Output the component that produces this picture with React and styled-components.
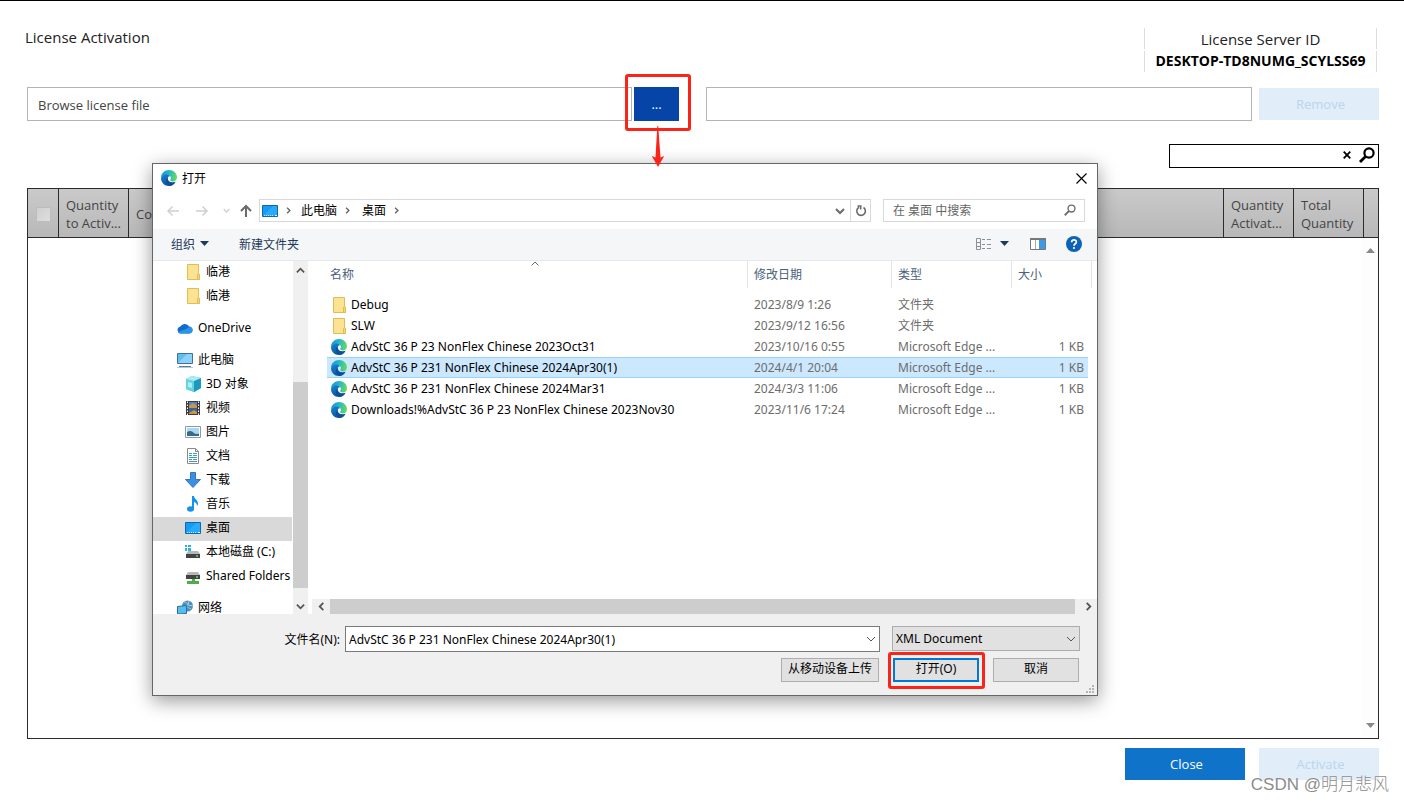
import { useState } from 'react';
import styled, { createGlobalStyle } from 'styled-components';

const GlobalStyle = createGlobalStyle`
  *, *::before, *::after {
    box-sizing: border-box;
  }

  body {
    margin: 0;
    background: #fff;
    color: #222;
    font-family: 'Open Sans', 'Noto Sans CJK SC', sans-serif;
    font-size: 13px;
  }

  button, input, select {
    margin: 0;
    padding: 0;
    border: none;
    border-radius: 0;
    background: none;
    color: inherit;
    font: inherit;
    outline: none;
  }

  a {
    color: inherit;
    text-decoration: none;
  }

  svg {
    display: block;
    flex-shrink: 0;
  }
`;

/* ---------- page ---------- */

const Page = styled.main`
  position: relative;
  display: flex;
  flex-direction: column;
  min-height: 100vh;
  padding: 27px 25px 23px;
  border-top: 1px solid #000;
`;

const Header = styled.header`
  display: flex;
  justify-content: space-between;
  padding-right: 2px;
  margin-bottom: 15px;
`;

const PageTitle = styled.h1`
  margin: 0;
  font-size: 15px;
  font-weight: 400;
  line-height: 18px;
`;

const ServerId = styled.div`
  display: flex;
  flex-direction: column;
  gap: 2px;
  width: 233px;
  text-align: center;
`;

const ServerLine = styled.div`
  border: solid #ddd;
  border-width: 0 1px;
  font-size: ${props => (props.$strong ? '14px' : '15px')};
  font-weight: ${props => (props.$strong ? 700 : 400)};
  color: ${props => (props.$strong ? '#000' : '#222')};
  line-height: ${props => (props.$strong ? '19px' : '22px')};
  height: 21px;
`;

const Content = styled.section`
  display: flex;
  flex: 1;
  flex-direction: column;
  padding-left: 2px;
`;

const FileRow = styled.div`
  display: flex;
  align-items: center;
  margin-bottom: 23px;
`;

const FileInput = styled.input`
  flex: ${props => props.$grow} 1 0;
  min-width: 0;
  height: 34px;
  padding: 2px 10px 0;
  border: 1px solid #b4b4b4;
  font-size: 13px;

  &::placeholder {
    color: #444;
    opacity: 1;
  }
`;

const BrowseWrap = styled.div`
  position: relative;
  margin: 0 27px 0 2px;
`;

const BrowseButton = styled.button`
  display: block;
  width: 45px;
  height: 34px;
  background: #0645a7;
  color: #fff;
`;

const Marker = styled.span`
  position: absolute;
  inset: ${props => props.$inset};
  z-index: 5;
  border: 3px solid #fb2419;
  border-radius: 3px;
  pointer-events: none;
`;

const MarkerArrow = styled.svg`
  position: absolute;
  left: 17px;
  top: 39px;
  z-index: 5;
`;

const ActionButton = styled.button`
  width: 120px;
  height: 32px;
  margin-left: ${props => props.$gap || 0}px;
  padding-left: 3px;
  background: #0f73c9;
  color: #fff;
  font-size: 13px;

  &:disabled {
    background: #e1edf8;
    color: #b9d6ee;
  }
`;

const Filter = styled.div`
  display: flex;
  align-self: flex-end;
  align-items: center;
  width: 210px;
  height: 24px;
  margin-bottom: 20px;
  padding: 0 1px 2px 0;
  border: 1px solid #000;
`;

const FilterInput = styled.input`
  flex: 1;
  min-width: 0;
  height: 100%;
  padding: 0 6px;
`;

const IconButton = styled.button`
  display: flex;
  align-items: center;
  justify-content: center;
  width: ${props => props.$width || 20}px;
  height: 100%;
`;

const Grid = styled.div`
  display: flex;
  flex: 1;
  flex-direction: column;
  border: 1px solid #2b2b2b;
`;

const GridTable = styled.table`
  width: 100%;
  border-collapse: separate;
  border-spacing: 0;
  table-layout: fixed;
`;

const GridHead = styled.th`
  width: ${props => (props.$width ? `${props.$width}px` : 'auto')};
  height: 49px;
  padding: ${props => (props.$center ? '2px 0 0' : '2px 0 0 7px')};
  border: solid #2b2b2b;
  border-width: 0 1px 1px 0;
  background: linear-gradient(#cacaca, #b8b8b8);
  color: #444;
  font-size: 13px;
  font-weight: 400;
  line-height: 18px;
  text-align: ${props => (props.$center ? 'center' : 'left')};
  white-space: nowrap;

  &:last-child {
    border-right: none;
  }
`;

const Check = styled.input`
  appearance: none;
  display: block;
  width: 15px;
  height: 15px;
  margin: 0 auto;
  border: 1px solid #bdbdbd;
  background: linear-gradient(135deg, #cfcfcf, #dedede);
`;

const GridScroll = styled.div`
  display: flex;
  flex: 1;
  flex-direction: column;
  justify-content: space-between;
  align-self: flex-end;
  align-items: center;
  width: 16px;
  padding: 10px 0;
  background: #fdfdfd;
`;

const Actions = styled.footer`
  display: flex;
  justify-content: flex-end;
  padding-top: 9px;
`;

const Watermark = styled.span`
  position: absolute;
  right: 15px;
  bottom: 5px;
  color: #8c8c8c;
  font-family: 'Liberation Sans', 'Noto Sans CJK SC', sans-serif;
  font-size: 17px;
  font-weight: 300;
  line-height: 26px;
  text-shadow: 0 0 1px #fff;
`;

/* ---------- open dialog ---------- */

const Dialog = styled.section`
  position: absolute;
  left: 152px;
  right: 306px;
  top: 162px;
  z-index: 2;
  border: 1px solid #666;
  background: #fff;
  box-shadow: 0 5px 18px rgba(0, 0, 0, 0.4);
  color: #000;
  font-family: 'Noto Sans', 'Noto Sans CJK SC', sans-serif;
  font-size: 12px;
`;

const TitleBar = styled.header`
  display: flex;
  align-items: center;
  gap: 5px;
  height: 28px;
  padding: 0 4px 0 8px;
`;

const DialogTitle = styled.h2`
  flex: 1;
  margin: 0;
  font-size: 12px;
  font-weight: 400;
`;

const NavBar = styled.nav`
  display: flex;
  align-items: center;
  height: 37px;
  padding: 7px 12px 7px 8px;
`;

const NavButton = styled.button`
  display: flex;
  justify-content: center;
  width: ${props => props.$width}px;
`;

const AddressBar = styled.div`
  display: flex;
  flex: 1;
  align-items: center;
  height: 23px;
  margin-right: 12px;
  padding-left: 2px;
  border: 1px solid #d9d9d9;
`;

const Crumb = styled.a`
  margin-left: ${props => props.$gap}px;
  padding-bottom: 2px;
`;

const CrumbArrow = styled.span`
  display: flex;
  justify-content: center;
  width: 20px;
`;

const Spacer = styled.span`
  flex: 1;
`;

const Refresh = styled(IconButton)`
  border-left: 1px solid #d9d9d9;
`;

const SearchBox = styled.div`
  display: flex;
  align-items: center;
  width: 202px;
  height: 23px;
  padding: 0 8px 1px 9px;
  border: 1px solid #d9d9d9;
`;

const SearchInput = styled.input`
  flex: 1;
  min-width: 0;

  &::placeholder {
    color: #666;
    opacity: 1;
  }
`;

const Toolbar = styled.div`
  display: flex;
  align-items: center;
  height: 32px;
  padding: 0 15px 2px 18px;
  border-bottom: 1px solid #e6e8ea;
  background: #f5f6f7;
  color: #1e395b;
`;

const ToolButton = styled.button`
  display: flex;
  align-items: center;
  gap: 5px;
  margin-right: ${props => props.$gap || 0}px;
`;

const Body = styled.div`
  display: flex;
  height: 353px;
`;

const Sidebar = styled.aside`
  display: flex;
  width: 155px;
  overflow: hidden;
`;

const Places = styled.div`
  flex: 1;
  min-width: 0;
  overflow: hidden;
`;

const Place = styled.a`
  display: flex;
  align-items: center;
  gap: 5px;
  height: 24px;
  margin-top: ${props => (props.$group ? '8px' : 0)};
  padding-bottom: 2px;
  padding-left: ${props => (props.$root ? '24px' : '32px')};
  background: ${props => (props.$active ? '#d9d9d9' : 'none')};
  line-height: 16px;
  white-space: nowrap;
`;

const VScroll = styled.div`
  display: flex;
  flex-direction: column;
  align-items: center;
  width: 16px;
  border-left: 1px solid #fff;
  background: #f0f0f0;
`;

const ScrollArrow = styled.button`
  display: flex;
  flex-shrink: 0;
  align-items: center;
  justify-content: center;
  width: ${props => props.$width || 15}px;
  height: ${props => props.$height || 15}px;
`;

const VThumb = styled.div`
  width: 15px;
  height: 206px;
  margin-top: auto;
  margin-bottom: 11px;
  background: #cdcdcd;
`;

const FilePane = styled.div`
  display: flex;
  flex: 1;
  flex-direction: column;
  justify-content: space-between;
  padding-left: 4px;
`;

const FileTable = styled.table`
  width: calc(100% - 20px);
  margin-left: 15px;
  border-collapse: separate;
  border-spacing: 0;
  table-layout: fixed;

  tbody::before {
    content: '';
    display: block;
    height: 6px;
  }
`;

const FileHead = styled.th`
  position: relative;
  width: ${props => (props.$width ? `${props.$width}px` : 'auto')};
  height: 27px;
  padding: 0 0 2px ${props => (props.$width ? 6 : 3)}px;
  border-right: 1px solid #e5e5e5;
  color: #4c607a;
  font-weight: 400;
  text-align: left;
`;

const SortMark = styled.svg`
  position: absolute;
  left: calc(50% - 6px);
  top: 0;
`;

const FileLine = styled.tr`
  color: #6d6d6d;

  td {
    height: 21px;
    padding: 0 0 0 6px;
    background: ${props => (props.$selected ? '#cce8ff' : 'none')};
    box-shadow: ${props => (props.$selected ? 'inset 0 1px #99d1ff, inset 0 -1px #99d1ff' : 'none')};
    line-height: 18px;
    white-space: nowrap;
  }

  td:first-child {
    padding-left: 4px;
    color: #000;
  }

  td:last-child {
    padding-right: 4px;
    border-right: 4px solid transparent;
    background-clip: padding-box;
    text-align: right;
  }
`;

const FileName = styled.span`
  display: flex;
  align-items: center;
  gap: 4px;
`;

const HScroll = styled.div`
  display: flex;
  height: 15px;
  background: #f0f0f0;
`;

const HThumb = styled.div`
  flex: 1;
  margin-right: 4px;
  background: #cdcdcd;
`;

const DialogFooter = styled.footer`
  position: relative;
  height: 81px;
  padding: 12px 17px 0 0;
  background: #f0f0f0;
`;

const FooterRow = styled.div`
  display: flex;
  align-items: center;
  justify-content: flex-end;
  height: 26px;
  margin-bottom: 6px;
`;

const NameLabel = styled.label`
  margin-right: 5px;
  padding-bottom: 1px;
`;

const Combo = styled.div`
  display: flex;
  align-items: center;
  width: 535px;
  height: 26px;
  margin-right: 12px;
  padding: 0 3px;
  border: 1px solid #7a7a7a;
  background: #fff;

  input {
    flex: 1;
    min-width: 0;
  }
`;

const TypeWrap = styled.div`
  position: relative;
  align-self: flex-start;
  width: 188px;
  height: 25px;

  svg {
    position: absolute;
    right: 4px;
    top: 8px;
    pointer-events: none;
  }
`;

const TypeSelect = styled.select`
  appearance: none;
  width: 100%;
  height: 100%;
  padding: 0 20px 0 3px;
  border: 1px solid #adadad;
  background: #e1e1e1;
`;

const ButtonRow = styled.div`
  display: flex;
  justify-content: flex-end;
  gap: 14px;
  padding-right: 1px;
`;

const DialogButton = styled.button`
  width: ${props => props.$width || 86}px;
  height: 24px;
  padding-bottom: 2px;
  border: ${props => (props.$primary ? '2px solid #0078d7' : '1px solid #adadad')};
  background: #e1e1e1;
  line-height: 18px;
  white-space: nowrap;
`;

const OpenWrap = styled.div`
  position: relative;
`;

const Grip = styled.svg`
  position: absolute;
  right: 3px;
  bottom: 2px;
`;

/* ---------- icons ---------- */

const Chevron = ({ dir = 'down', size = 10, color = '#555', width = 2 }) => {
  const paths = {
    down: 'M1 3l4 4 4-4',
    up: 'M1 7l4-4 4 4',
    left: 'M7 1L3 5l4 4',
    right: 'M3 1l4 4-4 4',
  };
  return (
    <svg width={size} height={size} viewBox="0 0 10 10" fill="none" stroke={color} strokeWidth={width}>
      <path d={paths[dir]} />
    </svg>
  );
};

const Arrow = ({ dir, color }) => (
  <svg width="14" height="14" viewBox="0 0 14 14" fill="none" stroke={color} strokeWidth={dir === 'up' ? 2 : 1.5}>
    {dir === 'left' && <path d="M13 7H2M6.5 2.5L2 7l4.5 4.5" />}
    {dir === 'right' && <path d="M1 7h11M7.5 2.5L12 7l-4.5 4.5" />}
    {dir === 'up' && <path d="M7 13V2M2 7l5-5 5 5" />}
  </svg>
);

const Triangle = ({ up, color = '#1e395b' }) => (
  <svg width="9" height="5" viewBox="0 0 9 5" fill={color}>
    <path d={up ? 'M0 5L4.5 0 9 5z' : 'M0 0h9L4.5 5z'} />
  </svg>
);

const Magnifier = ({ size, color, width }) => (
  <svg width={size} height={size} viewBox="0 0 16 16" fill="none" stroke={color} strokeWidth={width}>
    <circle cx="10" cy="6" r="4.6" />
    <path d="M6.8 9.2L1 15" strokeWidth={width + 0.6} />
  </svg>
);

const EdgeIcon = () => (
  <svg width="16" height="16" viewBox="0 0 16 16">
    <defs>
      <linearGradient id="edgeTop" x1="0" y1="0.4" x2="1" y2="0.5">
        <stop offset="0" stopColor="#1795d8" />
        <stop offset="0.5" stopColor="#26b8c8" />
        <stop offset="1" stopColor="#6bdc58" />
      </linearGradient>
      <linearGradient id="edgeLow" x1="0" y1="0" x2="0.8" y2="1">
        <stop offset="0" stopColor="#1587d6" />
        <stop offset="1" stopColor="#0b458c" />
      </linearGradient>
    </defs>
    <path fill="url(#edgeTop)" d="M0 7.600C.2 3.300 3.700 0 8 0c4.700 0 8 3.400 8 7.200 0 2.600-1.700 4.200-4 4.200-1.900 0-2.900-.7-2.900-1.400 0-.6.8-.9.8-2.100 0-1.500-1.300-2.900-3.300-2.900C3.800 5 1.200 5.700 0 7.600z" />
    <path fill="url(#edgeLow)" d="M0 8c.8-2.300 3-3.600 5.200-3.600 1.800 0 3.400.7 4.200 2-1.500-.6-2.700.4-2.700 2.200 0 2.100 1.700 3.800 4.400 3.800 1.400 0 2.500-.3 3.400-.7C13.100 14.400 10.700 16 8 16c-4.500 0-8-3.500-8-8z" />
    <path fill="#0c4f9e" d="M6.800 7.800c-.5 2.600 1.500 4.700 4.400 4.700 1.400 0 2.600-.4 3.300-.8-1.300 2.400-3.300 3.900-5.800 4.200C5.200 15.200 3.200 10.800 6.800 7.800z" />
  </svg>
);

const FolderIcon = () => (
  <svg width="16" height="18" viewBox="0 0 16 18">
    <path d="M2.500 1.500h11v9l1 1v5h-12z" fill="#fbe391" stroke="#dfbd55" />
    <path d="M12.500 11.500c0-1 2-1 2 0v5h-2z" fill="#f7d774" stroke="#dfbd55" />
  </svg>
);

const DesktopIcon = () => (
  <svg width="16" height="12" viewBox="0 0 16 12">
    <path d="M.5.500h15v11H.500z" fill="#129cf5" stroke="#0c69ae" />
    <path d="M1 11L11 1h4v10z" fill="#2aaafc" />
    <path d="M2 10.500h10" stroke="#bfe5ff" strokeDasharray="1 1" />
    <path d="M13 10.500h2" stroke="#fff" />
  </svg>
);

const CloudIcon = () => (
  <svg width="16" height="11" viewBox="0 0 16 11">
    <path d="M4 10.500a3.600 3.600 0 0 1-.6-7.100A5 5 0 0 1 12 3.500a3.600 3.600 0 0 1 .6 7z" fill="#0f6cc9" />
    <path d="M4 3.500l5 2.500 4-2.400a3.500 3.500 0 0 1 2.500 5c-.6 1.300-1.600 1.900-2.900 1.900H4c-1.400 0-2.500-.5-3.100-1.600l8-3z" fill="#2b93e8" />
  </svg>
);

const PcIcon = () => (
  <svg width="16" height="16" viewBox="0 0 16 16">
    <path d="M.5 1.500h15v10H.5z" fill="#5dbdf5" stroke="#44708e" />
    <path d="M1 11L10 2h5v9z" fill="#8bd2fa" />
    <path d="M2 14.500h12" stroke="#5a7f99" />
    <path d="M0 15.500h16" stroke="#b8c9d6" />
  </svg>
);

const CubeIcon = () => (
  <svg width="16" height="16" viewBox="0 0 16 16">
    <path d="M1 3l6-3 9 2v10l-7 4-8-3z" fill="#43bed4" />
    <path d="M1 3l8 2v11l-8-3z" fill="#64d3e4" />
    <path d="M9 5l7-3v10l-7 4z" fill="#1a9bbb" />
    <path d="M1 3l6-3 9 2-7 3z" fill="#aeecf3" />
    <path d="M3 6l4 1v5l-4-1z" fill="#b0edf4" />
  </svg>
);

const VideoIcon = () => (
  <svg width="16" height="16" viewBox="0 0 16 16">
    <path d="M1 1h14v14H1z" fill="#3b3b3b" />
    <path d="M4 2h8v6H4z" fill="#5a7fc4" />
    <path d="M4 8h8v6H4z" fill="#3f5fa2" />
    <path d="M4 6l4-3 4 3v2H4zM4 13l5-3 3 2v2H4z" fill="#c69a45" />
    <path d="M2.500 1.500v14M13.500 1.500v14" stroke="#fff" strokeDasharray="1.500 1.500" />
  </svg>
);

const PictureIcon = () => (
  <svg width="16" height="16" viewBox="0 0 16 16">
    <path d="M.5 2.500h15v11H.5z" fill="#fff" stroke="#8c9aa5" />
    <path d="M2 4h12v8H2z" fill="#a9d8f4" />
    <path d="M2 8c3-2 5-1 7 1s4 0 5 1v2H2z" fill="#376b86" />
  </svg>
);

const DocIcon = () => (
  <svg width="16" height="16" viewBox="0 0 16 16" fill="none">
    <path d="M2.500.5h8l3 3v12h-11z" fill="#fff" stroke="#8a8a8a" />
    <path d="M10.500.5v3h3" stroke="#8a8a8a" />
    <path d="M8 5.500h4M4 5.500h3M4 7.500h3M8 7.500h4M4 9.500h8M4 11.500h3M8 11.500h4M4 13.500h8" stroke="#3d9cb8" />
  </svg>
);

const DownloadIcon = () => (
  <svg width="16" height="16" viewBox="0 0 16 16">
    <path d="M5.500.5h5v7h5L8 15.500.5 7.500h5z" fill="#3d8fe0" stroke="#2d78c4" />
  </svg>
);

const MusicIcon = () => (
  <svg width="16" height="16" viewBox="0 0 16 16" fill="#1593e6">
    <ellipse cx="5.500" cy="13" rx="3.500" ry="2.800" />
    <path d="M7 0h2c.3 3 4 4 4 7.500 0 1-.4 2-1 2.500.2-2-1-3.500-3-4v7H7z" />
  </svg>
);

const DiskIcon = ({ shared }) => (
  <svg width="16" height="16" viewBox="0 0 16 16">
    {!shared && <path d="M0 1h2v2H0zM3 1h3v2H3zM0 4h2v3H0zM3 4h3v3H3z" fill="#27b5e0" />}
    <path d={shared ? 'M3 4h10l2 3H1z' : 'M3 7h10l2 3H1z'} fill="#b8b8b8" />
    <path d={shared ? 'M1 7h14v4H1z' : 'M1 10h14v4H1z'} fill="#444" />
    <path d={shared ? 'M11 9h2' : 'M11 12h2'} stroke="#54e05c" strokeWidth="1.500" />
    {shared && <path d="M7 11h3v2h4v3H2v-3h5z" fill="#4fae4c" />}
  </svg>
);

const NetworkIcon = () => (
  <svg width="16" height="16" viewBox="0 0 16 16">
    <circle cx="10.500" cy="6" r="5.500" fill="#4c8fb8" />
    <path d="M7 2c2 0 4 1 3 3s2 3 4 4M12 1l-1 4 5 1" fill="none" stroke="#a4d2e8" />
    <path d="M.5 6.500l9-1v8l-9 .5z" fill="#55bdf2" stroke="#2c6f9d" />
    <path d="M2 15.500h8" stroke="#5a7f99" />
  </svg>
);

/* ---------- data ---------- */

const places = [
  { name: '临港', icon: <FolderIcon /> },
  { name: '临港', icon: <FolderIcon /> },
  { name: 'OneDrive', icon: <CloudIcon />, root: true },
  { name: '此电脑', icon: <PcIcon />, root: true },
  { name: '3D 对象', icon: <CubeIcon /> },
  { name: '视频', icon: <VideoIcon /> },
  { name: '图片', icon: <PictureIcon /> },
  { name: '文档', icon: <DocIcon /> },
  { name: '下载', icon: <DownloadIcon /> },
  { name: '音乐', icon: <MusicIcon /> },
  { name: '桌面', icon: <DesktopIcon />, active: true },
  { name: '本地磁盘 (C:)', icon: <DiskIcon /> },
  { name: 'Shared Folders', icon: <DiskIcon shared /> },
  { name: '网络', icon: <NetworkIcon />, root: true },
];

const files = [
  { name: 'Debug', date: '2023/8/9 1:26', folder: true },
  { name: 'SLW', date: '2023/9/12 16:56', folder: true },
  { name: 'AdvStC 36 P 23 NonFlex Chinese 2023Oct31', date: '2023/10/16 0:55' },
  { name: 'AdvStC 36 P 231 NonFlex Chinese 2024Apr30(1)', date: '2024/4/1 20:04' },
  { name: 'AdvStC 36 P 231 NonFlex Chinese 2024Mar31', date: '2024/3/3 11:06' },
  { name: 'Downloads!%AdvStC 36 P 23 NonFlex Chinese 2023Nov30', date: '2023/11/6 17:24' },
];

const OpenDialog = () => {
  const [selected, setSelected] = useState(files[3].name);

  return (
    <Dialog role="dialog" aria-labelledby="dialog-title">
      <TitleBar>
        <EdgeIcon />
        <DialogTitle id="dialog-title">打开</DialogTitle>
        <IconButton $width={24} aria-label="关闭">
          <svg width="11" height="11" viewBox="0 0 11 11" stroke="#000" strokeWidth="1.200">
            <path d="M.5.5l10 10M10.500.5l-10 10" />
          </svg>
        </IconButton>
      </TitleBar>

      <NavBar>
        <NavButton $width={24} aria-label="后退"><Arrow dir="left" color="#d0d0d0" /></NavButton>
        <NavButton $width={34} aria-label="前进"><Arrow dir="right" color="#d0d0d0" /></NavButton>
        <NavButton $width={14} aria-label="历史"><Chevron size={7} color="#d0d0d0" /></NavButton>
        <NavButton $width={26} aria-label="上移"><Arrow dir="up" color="#6b6b6b" /></NavButton>
        <AddressBar>
          <DesktopIcon />
          <CrumbArrow><Chevron dir="right" size={7} color="#666" /></CrumbArrow>
          <Crumb href="#" $gap={3}>此电脑</Crumb>
          <CrumbArrow><Chevron dir="right" size={7} color="#666" /></CrumbArrow>
          <Crumb href="#" $gap={5}>桌面</Crumb>
          <CrumbArrow><Chevron dir="right" size={7} color="#666" /></CrumbArrow>
          <Spacer />
          <IconButton aria-label="展开"><Chevron color="#6b6b6b" /></IconButton>
          <Refresh aria-label="刷新">
            <svg width="12" height="12" viewBox="0 0 12 12" fill="none" stroke="#6b6b6b" strokeWidth="1.600">
              <path d="M8.500 2.500A4.300 4.300 0 1 1 4 2.300M2.500 1h3.200v3.500" />
            </svg>
          </Refresh>
        </AddressBar>
        <SearchBox>
          <SearchInput aria-label="搜索" placeholder="在 桌面 中搜索" />
          <Magnifier size={12} color="#6b6b6b" width={1.8} />
        </SearchBox>
      </NavBar>

      <Toolbar>
        <ToolButton $gap={30}>组织 <Triangle /></ToolButton>
        <ToolButton>新建文件夹</ToolButton>
        <Spacer />
        <ToolButton $gap={21} aria-label="更改视图">
          <svg width="20" height="14" viewBox="0 0 20 14" fill="none" stroke="#8a8f94">
            <path d="M1.500 1.500h4v11h-4zM1.500 5.500h4M1.500 9.500h4" />
            <path d="M7 2.500h3M12 2.500h4M7 7.500h3M12 7.500h4M7 11.500h3M12 11.500h4" />
          </svg>
          <Triangle />
        </ToolButton>
        <ToolButton $gap={20} aria-label="预览窗格">
          <svg width="16" height="12" viewBox="0 0 16 12">
            <path d="M.5.500h15v11H.500z" fill="#fff" stroke="#777" />
            <path d="M0 0h16v2H0z" fill="#777" />
            <path d="M9 2h6v9H9z" fill="#3a9be8" />
            <path d="M5.500 2v9" stroke="#aaa" />
          </svg>
        </ToolButton>
        <ToolButton aria-label="帮助">
          <svg width="16" height="16" viewBox="0 0 16 16">
            <circle cx="8" cy="8" r="8" fill="#0b62b8" />
            <path d="M5.600 6.200c0-3.200 4.800-3 4.800-.2C10.400 7.800 8 7.800 8 9.800" fill="none" stroke="#fff" strokeWidth="1.700" />
            <circle cx="8" cy="12" r="1.100" fill="#fff" />
          </svg>
        </ToolButton>
      </Toolbar>

      <Body>
        <Sidebar>
          <Places>
            {places.map((place, i) => (
              <Place key={i} href="#" $root={place.root} $group={place.root} $active={place.active}>
                {place.icon}
                {place.name}
              </Place>
            ))}
          </Places>
          <VScroll>
            <ScrollArrow $height={18} aria-label="向上"><Chevron dir="up" size={9} /></ScrollArrow>
            <VThumb />
            <ScrollArrow aria-label="向下"><Chevron size={9} /></ScrollArrow>
          </VScroll>
        </Sidebar>

        <FilePane>
          <FileTable>
            <thead>
              <tr>
                <FileHead>
                  名称
                  <SortMark width="8" height="5" viewBox="0 0 8 5" fill="none" stroke="#666">
                    <path d="M.5 4.500L4 1l3.500 3.500" />
                  </SortMark>
                </FileHead>
                <FileHead $width={144}>修改日期</FileHead>
                <FileHead $width={120}>类型</FileHead>
                <FileHead $width={80}>大小</FileHead>
              </tr>
            </thead>
            <tbody>
              {files.map(file => (
                <FileLine
                  key={file.name}
                  $selected={file.name === selected}
                  onClick={() => setSelected(file.name)}
                >
                  <td>
                    <FileName>
                      {file.folder ? <FolderIcon /> : <EdgeIcon />}
                      {file.name}
                    </FileName>
                  </td>
                  <td>{file.date}</td>
                  <td>{file.folder ? '文件夹' : 'Microsoft Edge ...'}</td>
                  <td>{file.folder ? '' : '1 KB'}</td>
                </FileLine>
              ))}
            </tbody>
          </FileTable>
          <HScroll>
            <ScrollArrow $width={18} aria-label="向左"><Chevron dir="left" size={9} /></ScrollArrow>
            <HThumb />
            <ScrollArrow $width={18} aria-label="向右"><Chevron dir="right" size={9} /></ScrollArrow>
          </HScroll>
        </FilePane>
      </Body>

      <DialogFooter>
        <FooterRow>
          <NameLabel htmlFor="file-name">文件名(N):</NameLabel>
          <Combo>
            <input
              id="file-name"
              value={selected}
              onChange={e => setSelected(e.target.value)}
            />
            <Chevron width={1} />
          </Combo>
          <TypeWrap>
            <TypeSelect aria-label="文件类型">
              <option>XML Document</option>
            </TypeSelect>
            <Chevron width={1} />
          </TypeWrap>
        </FooterRow>
        <ButtonRow>
          <DialogButton $width={98}>从移动设备上传</DialogButton>
          <OpenWrap>
            <DialogButton $primary>打开(O)</DialogButton>
            <Marker $inset="-6px -6px -7px -5px" />
          </OpenWrap>
          <DialogButton>取消</DialogButton>
        </ButtonRow>
        <Grip width="8" height="8" viewBox="0 0 8 8" fill="#b5b5b5">
          <path d="M6 0h2v2H6zM3 3h2v2H3zM6 3h2v2H6zM0 6h2v2H0zM3 6h2v2H3zM6 6h2v2H6z" />
        </Grip>
      </DialogFooter>
    </Dialog>
  );
};

const App = () => {
  const [filter, setFilter] = useState('');

  return (
    <>
      <GlobalStyle />
      <Page>
        <Header>
          <PageTitle>License Activation</PageTitle>
          <ServerId>
            <ServerLine>License Server ID</ServerLine>
            <ServerLine $strong>DESKTOP-TD8NUMG_SCYLSS69</ServerLine>
          </ServerId>
        </Header>

        <Content>
          <FileRow>
            <FileInput $grow={583} aria-label="License file" placeholder="Browse license file" />
            <BrowseWrap>
              <BrowseButton>...</BrowseButton>
              <Marker $inset="-13px -12px -10px -9px" />
              <MarkerArrow width="14" height="41" viewBox="0 0 14 41" fill="#fb2419">
                <path d="M6.300 0h.9l2.300 31.500 3.700-1.500L7 41 .8 30l3.700 1.500z" />
              </MarkerArrow>
            </BrowseWrap>
            <FileInput $grow={524} aria-label="Selected license" />
            <ActionButton $gap={7} disabled>Remove</ActionButton>
          </FileRow>

          <Filter>
            <FilterInput aria-label="Filter" value={filter} onChange={e => setFilter(e.target.value)} />
            <IconButton aria-label="Clear" onClick={() => setFilter('')}>
              <svg width="8" height="8" viewBox="0 0 8 8" stroke="#000" strokeWidth="1.800">
                <path d="M.7.7l6.600 6.600M7.300.7L.7 7.300" />
              </svg>
            </IconButton>
            <IconButton aria-label="Search"><Magnifier size={16} color="#000" width={2.2} /></IconButton>
          </Filter>

          <Grid>
            <GridTable>
              <thead>
                <tr>
                  <GridHead $width={31} $center><Check type="checkbox" aria-label="Select all" /></GridHead>
                  <GridHead $width={70}>Quantity<br />to Activ...</GridHead>
                  <GridHead>Co</GridHead>
                  <GridHead $width={70}>Quantity<br />Activat...</GridHead>
                  <GridHead $width={70}>Total<br />Quantity</GridHead>
                  <GridHead $width={14} />
                </tr>
              </thead>
            </GridTable>
            <GridScroll>
              <Triangle up color="#888" />
              <Triangle color="#888" />
            </GridScroll>
          </Grid>

          <Actions>
            <ActionButton>Close</ActionButton>
            <ActionButton $gap={14} disabled>Activate</ActionButton>
          </Actions>
        </Content>

        <OpenDialog />
        <Watermark>CSDN @明月悲风</Watermark>
      </Page>
    </>
  );
};

export default App;
